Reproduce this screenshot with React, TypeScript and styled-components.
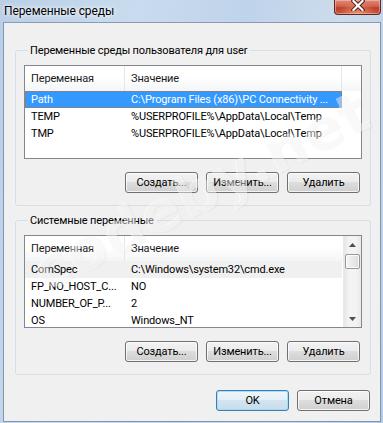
import styled, { createGlobalStyle } from "styled-components";

const UI_FONT = `Roboto, "Noto Sans", Arial, sans-serif`;

const GlobalStyle = createGlobalStyle`
  html, body {
    margin: 0;
    padding: 0;
    width: 383px;
    height: 423px;
    overflow: hidden;
    background: #ffffff;
  }
  body {
    font-family: ${UI_FONT};
    font-size: 11px;
    letter-spacing: -0.15px;
    color: #000;
  }
  * {
    box-sizing: border-box;
  }
`;

const Window = styled.div`
  position: relative;
  width: 383px;
  height: 423px;
  display: flex;
  flex-direction: column;
  padding: 0 2px 1px 3px;
  overflow: hidden;
  background: linear-gradient(
    100deg,
    #b9cfe7 0%,
    #c9dbee 30%,
    #bfd3ea 55%,
    #cddcec 75%,
    #b6cce5 100%
  );
`;

const TitleBar = styled.div`
  height: 22px;
  flex: none;
  display: flex;
  align-items: flex-start;
  justify-content: space-between;
`;

const Title = styled.span`
  padding: 4px 0 0 1px;
  font-size: 12px;
  letter-spacing: -0.1px;
  line-height: 15px;
  color: #000;
  text-shadow: 0 0 6px #fff, 0 0 3px rgba(255, 255, 255, 0.9);
`;

const CloseButton = styled.button`
  width: 47px;
  height: 15px;
  padding: 0;
  border: 1px solid #5c2a24;
  border-top: none;
  border-radius: 0 0 4px 4px;
  display: flex;
  align-items: flex-start;
  justify-content: center;
  background: radial-gradient(
      ellipse at 50% 90%,
      rgba(255, 180, 140, 0.6) 0%,
      rgba(255, 180, 140, 0) 60%
    ),
    linear-gradient(to bottom, #e08b7a 0%, #d0604b 45%, #bd3f27 55%, #c8553c 100%);
  box-shadow: inset 0 0 0 1px rgba(255, 210, 200, 0.45);
`;

const Client = styled.div`
  flex: 1;
  display: flex;
  flex-direction: column;
  padding: 20px 9px 0 11px;
  background: #f0f0f0;
  border: 1px solid #7f95b1;
  border-top-color: #8a9cb3;
`;

const GroupBox = styled.fieldset<{ $gap?: number }>`
  margin: ${(p) => p.$gap ?? 0}px 0 0;
  padding: 7px 8px 12px 8px;
  border: 1px solid #d5dfe5;
  border-radius: 3px;
  display: flex;
  flex-direction: column;
  gap: 13px;
  min-width: 0;
`;

const Legend = styled.legend`
  margin-left: 4px;
  padding: 0 2px;
  line-height: 15px;
  color: #000;
`;

const ListView = styled.div<{ $height: number }>`
  height: ${(p) => p.$height}px;
  border: 1px solid #828790;
  background: #fff;
  display: flex;
  overflow: hidden;
`;

const ListMain = styled.div`
  flex: 1;
  min-width: 0;
  display: flex;
  flex-direction: column;
`;

const HeaderRow = styled.div`
  height: 25px;
  flex: none;
  display: flex;
  background: linear-gradient(to bottom, #ffffff 0%, #ffffff 45%, #f4f5f7 100%);
`;

const HeaderCell = styled.div<{ $width?: number }>`
  ${(p) => (p.$width ? `width: ${p.$width}px; flex: none;` : "flex: 1;")}
  display: flex;
  align-items: center;
  padding-left: 6px;
  border-right: 1px solid #e3e6ea;
  color: #1a1a1a;
  white-space: nowrap;
  overflow: hidden;

  &:last-child {
    border-right: none;
  }
`;

const Row = styled.div<{ $state?: "selected" | "inactive" }>`
  height: 17px;
  flex: none;
  width: 317px;
  display: flex;
  align-items: center;
  white-space: nowrap;
  color: ${(p) => (p.$state === "selected" ? "#fff" : "#000")};
  background: ${(p) =>
    p.$state === "selected"
      ? "#3399ff"
      : p.$state === "inactive"
      ? "#f0f0f0"
      : "transparent"};
  outline: ${(p) => (p.$state === "selected" ? "1px dotted #c9701e" : "none")};
  outline-offset: -1px;
`;

const Cell = styled.div<{ $width?: number }>`
  ${(p) => (p.$width ? `width: ${p.$width}px; flex: none;` : "flex: 1;")}
  padding-left: 6px;
  overflow: hidden;
  line-height: 17px;
`;

const ScrollBar = styled.div`
  width: 18px;
  flex: none;
  display: flex;
  flex-direction: column;
  border-left: 1px solid #e9e9e9;
  background: linear-gradient(to right, #e6e6e6 0%, #f3f3f3 30%, #f3f3f3 70%, #e8e8e8 100%);
`;

const ArrowButton = styled.div`
  height: 17px;
  flex: none;
  display: flex;
  align-items: center;
  justify-content: center;
`;

const Thumb = styled.div`
  height: 15px;
  margin: 1px 1px 0 1px;
  border: 1px solid #979797;
  border-radius: 2px;
  background: linear-gradient(to right, #f6f6f6 0%, #e9e9e9 50%, #dcdcdc 100%);
  box-shadow: inset 0 0 0 1px rgba(255, 255, 255, 0.8);
`;

const Track = styled.div`
  flex: 1;
`;

const ButtonRow = styled.div<{ $right?: number }>`
  display: flex;
  justify-content: flex-end;
  gap: 8px;
  padding-right: ${(p) => p.$right ?? 0}px;
`;

const Button = styled.button<{ $default?: boolean; $width?: number }>`
  width: ${(p) => p.$width ?? 73}px;
  height: 21px;
  padding: 0;
  font-family: ${UI_FONT};
  font-size: 11px;
  letter-spacing: -0.15px;
  color: #000;
  border-radius: 3px;
  border: 1px solid ${(p) => (p.$default ? "#3c7fb1" : "#707070")};
  background: ${(p) =>
    p.$default
      ? "linear-gradient(to bottom, #eef6fb 0%, #e3eef6 50%, #d3e4f0 50%, #c9dcea 100%)"
      : "linear-gradient(to bottom, #f2f2f2 0%, #ebebeb 50%, #dddddd 50%, #cfcfcf 100%)"};
  box-shadow: inset 0 0 0 1px
    ${(p) => (p.$default ? "rgba(160, 220, 250, 0.9)" : "rgba(255, 255, 255, 0.75)")};
`;

const Footer = styled.div`
  margin-top: 15px;
  display: flex;
  justify-content: flex-end;
  gap: 8px;
  padding-right: 1px;
`;

const Watermark = styled.div`
  position: absolute;
  left: 201px;
  top: 191px;
  transform: translate(-50%, -50%) rotate(-27deg);
  font-family: "DejaVu Sans", ${UI_FONT};
  font-weight: bold;
  font-size: 58px;
  letter-spacing: 1px;
  color: rgba(255, 255, 255, 0.45);
  text-shadow: 1px 1px 1px rgba(0, 0, 0, 0.04);
  white-space: nowrap;
  pointer-events: none;
`;

type Variable = { name: string; value: string; state?: "selected" | "inactive" };

const USER_VARS: Variable[] = [
  { name: "Path", value: "C:\\Program Files (x86)\\PC Connectivity ...", state: "selected" },
  { name: "TEMP", value: "%USERPROFILE%\\AppData\\Local\\Temp" },
  { name: "TMP", value: "%USERPROFILE%\\AppData\\Local\\Temp" },
];

const SYSTEM_VARS: Variable[] = [
  { name: "ComSpec", value: "C:\\Windows\\system32\\cmd.exe", state: "inactive" },
  { name: "FP_NO_HOST_C...", value: "NO" },
  { name: "NUMBER_OF_P...", value: "2" },
  { name: "OS", value: "Windows_NT" },
];

function CloseIcon() {
  return (
    <svg width="14" height="11" viewBox="0 0 14 11">
      <path
        d="M2.5 1 L11.5 10 M11.5 1 L2.5 10"
        stroke="#4a1a12"
        strokeWidth="4"
        strokeLinecap="square"
      />
      <path
        d="M2.5 1 L11.5 10 M11.5 1 L2.5 10"
        stroke="#ffffff"
        strokeWidth="2.2"
        strokeLinecap="square"
      />
    </svg>
  );
}

function Arrow({ up }: { up?: boolean }) {
  return (
    <svg width="7" height="4" viewBox="0 0 7 4">
      <path d={up ? "M0 4 L3.5 0 L7 4 Z" : "M0 0 L3.5 4 L7 0 Z"} fill="#4d4d4d" />
    </svg>
  );
}

function VarList({
  vars,
  height,
  scroll,
}: {
  vars: Variable[];
  height: number;
  scroll?: boolean;
}) {
  return (
    <ListView $height={height}>
      <ListMain>
        <HeaderRow>
          <HeaderCell $width={100}>Переменная</HeaderCell>
          <HeaderCell $width={217}>Значение</HeaderCell>
          {!scroll && <HeaderCell />}
        </HeaderRow>
        {vars.map((v) => (
          <Row key={v.name} $state={v.state}>
            <Cell $width={100}>{v.name}</Cell>
            <Cell>{v.value}</Cell>
          </Row>
        ))}
      </ListMain>
      {scroll && (
        <ScrollBar>
          <ArrowButton>
            <Arrow up />
          </ArrowButton>
          <Thumb />
          <Track />
          <ArrowButton>
            <Arrow />
          </ArrowButton>
        </ScrollBar>
      )}
    </ListView>
  );
}

export default function App() {
  return (
    <>
      <GlobalStyle />
      <Window>
        <TitleBar>
          <Title>Переменные среды</Title>
          <CloseButton type="button" aria-label="Закрыть">
            <CloseIcon />
          </CloseButton>
        </TitleBar>
        <Client>
          <GroupBox>
            <Legend>Переменные среды пользователя для user</Legend>
            <VarList vars={USER_VARS} height={94} />
            <ButtonRow $right={2}>
              <Button>Создать...</Button>
              <Button>Изменить...</Button>
              <Button>Удалить</Button>
            </ButtonRow>
          </GroupBox>
          <GroupBox $gap={7}>
            <Legend>Системные переменные</Legend>
            <VarList vars={SYSTEM_VARS} height={93} scroll />
            <ButtonRow $right={2}>
              <Button>Создать...</Button>
              <Button>Изменить...</Button>
              <Button>Удалить</Button>
            </ButtonRow>
          </GroupBox>
          <Footer>
            <Button $default>OK</Button>
            <Button>Отмена</Button>
          </Footer>
        </Client>
        <Watermark>codeby.net</Watermark>
      </Window>
    </>
  );
}
